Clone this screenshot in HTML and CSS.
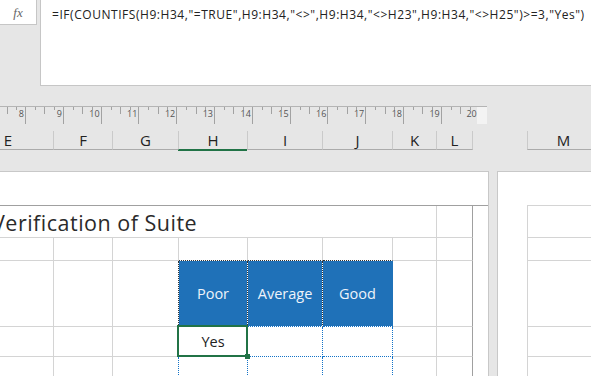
FILE: index.html
```html
<!DOCTYPE html>
<html lang="en">

<head>
  <meta charset="UTF-8">
  <meta name="viewport" content="width=device-width, initial-scale=1.0">
  <title>Verification of Suite</title>
  <link rel="stylesheet" href="styles.css">
</head>

<body>
  <div class="formula-bar">
    <div class="fx-box"><span class="fx">fx</span></div>
    <div class="formula-input">=IF(COUNTIFS(H9:H34,"=TRUE",H9:H34,"&lt;&gt;",H9:H34,"&lt;&gt;H23",H9:H34,"&lt;&gt;H25")&gt;=3,"Yes")</div>
  </div>

  <div class="ruler">
    <div class="ruler-unit first"><span>8</span></div>
    <div class="ruler-unit"><span>9</span></div>
    <div class="ruler-unit"><span>10</span></div>
    <div class="ruler-unit"><span>11</span></div>
    <div class="ruler-unit"><span>12</span></div>
    <div class="ruler-unit"><span>13</span></div>
    <div class="ruler-unit"><span>14</span></div>
    <div class="ruler-unit"><span>15</span></div>
    <div class="ruler-unit"><span>16</span></div>
    <div class="ruler-unit"><span>17</span></div>
    <div class="ruler-unit"><span>18</span></div>
    <div class="ruler-unit"><span>19</span></div>
    <div class="ruler-unit last"><span>20</span></div>
    <div class="ruler-end"></div>
  </div>

  <div class="col-headers">
    <div class="col-head col-e">E</div>
    <div class="col-head col-f">F</div>
    <div class="col-head col-g">G</div>
    <div class="col-head col-h active">H</div>
    <div class="col-head col-i">I</div>
    <div class="col-head col-j">J</div>
    <div class="col-head col-k">K</div>
    <div class="col-head col-l">L</div>
    <div class="col-gap"></div>
    <div class="col-head col-m">M</div>
  </div>

  <div class="sheet">
    <div class="page">
      <div class="grid">
        <!-- title row -->
        <div class="cell title"><span class="title-text">Verification of Suite</span></div>
        <div class="cell edge"></div>

        <!-- blank row -->
        <div class="cell"></div>
        <div class="cell"></div>
        <div class="cell"></div>
        <div class="cell ants-top"></div>
        <div class="cell ants-top"></div>
        <div class="cell ants-top"></div>
        <div class="cell"></div>
        <div class="cell edge"></div>

        <!-- rating header -->
        <div class="cell"></div>
        <div class="cell"></div>
        <div class="cell ants-right"></div>
        <div class="cell rating ants-right">Poor</div>
        <div class="cell rating ants-right">Average</div>
        <div class="cell rating rating-last">Good</div>
        <div class="cell"></div>
        <div class="cell edge"></div>

        <!-- result row -->
        <div class="cell"></div>
        <div class="cell"></div>
        <div class="cell"></div>
        <div class="cell value selected">Yes</div>
        <div class="cell copied"></div>
        <div class="cell copied"></div>
        <div class="cell"></div>
        <div class="cell edge"></div>

        <div class="cell"></div>
        <div class="cell"></div>
        <div class="cell copy-left"></div>
        <div class="cell copy-right"></div>
        <div class="cell copy-right"></div>
        <div class="cell copy-right"></div>
        <div class="cell"></div>
        <div class="cell edge"></div>
      </div>
    </div>

    <div class="page next">
      <div class="grid-next">
        <div class="cell row-title"></div>
        <div class="cell row-blank"></div>
        <div class="cell row-rating"></div>
        <div class="cell row-result"></div>
        <div class="cell row-result"></div>
      </div>
    </div>
  </div>
</body>

</html>
```

FILE: styles.css
```css
* {
  box-sizing: border-box;
}

body {
  margin: 0;
  width: 591px;
  height: 376px;
  overflow: hidden;
  background-color: #e6e6e6;
  font-family: "Open Sans", "Noto Sans", sans-serif;
  color: #222;
}

/* formula bar */

.formula-bar {
  display: flex;
  height: 86px;
  gap: 3px;
}

.fx-box {
  flex: none;
  width: 38px;
  height: 26px;
  margin: -1px 0 0 -1px;
  background-color: #fff;
  border: 1px solid #c6c6c6;
  text-align: center;
}

.fx {
  font-family: "Liberation Serif", serif;
  font-style: italic;
  font-size: 13px;
  line-height: 26px;
  color: #666;
}

.formula-input {
  flex: 1;
  margin-top: -1px;
  background-color: #fff;
  border-left: 1px solid #c6c6c6;
  border-bottom: 1px solid #c6c6c6;
  padding: 8px 0 0 11px;
  font-size: 12px;
  letter-spacing: 0.55px;
  line-height: 16px;
  white-space: nowrap;
}

/* ruler */

.ruler {
  display: flex;
  width: 487px;
  height: 18px;
  margin-top: 20px;
  border-top: 1px solid #b4b4b4;
  overflow: hidden;
}

.ruler-unit {
  flex: none;
  width: 37.8px;
  border-right: 1px solid #a2a2a2;
  padding-right: 1px;
  text-align: right;
  font-size: 9px;
  line-height: 14px;
  color: #555;
  background:
    linear-gradient(#a2a2a2, #a2a2a2) 18.4px 0 / 1px 7px no-repeat,
    linear-gradient(#a2a2a2, #a2a2a2) 9px 0 / 1px 3px no-repeat,
    linear-gradient(#a2a2a2, #a2a2a2) 28px 0 / 1px 3px no-repeat;
}

.ruler-unit.first {
  margin-left: -11.8px;
}

.ruler-unit.last {
  width: 35px;
  border-right: none;
  padding-right: 0;
}

.ruler-end {
  flex: 1;
  background-color: #f3f3f3;
}

/* column letters */

.col-headers {
  display: flex;
  height: 19px;
  margin-top: 7px;
}

.col-head {
  flex: none;
  border-left: 1px solid #cacaca;
  border-bottom: 1px solid #ababab;
  text-align: center;
  font-size: 15px;
  line-height: 18px;
  color: #222;
}

.col-e {
  width: 90px;
  margin-left: -37px;
  border-left: none;
}

.col-f { width: 59px; }
.col-g { width: 66px; }
.col-h { width: 69px; }
.col-i { width: 75px; }
.col-j { width: 70px; }
.col-k { width: 44px; }

.col-l {
  width: 37px;
  border-right: 1px solid #cacaca;
}

.col-gap {
  flex: none;
  width: 54px;
}

.col-m {
  width: 72px;
}

.col-head.active {
  border-bottom-color: #217346;
  box-shadow: 0 1px 0 #217346;
}

/* pages */

.sheet {
  display: flex;
  gap: 8px;
  margin-top: 21px;
}

.page {
  flex: none;
  width: 489px;
  height: 220px;
  background-color: #fff;
  border-top: 1px solid #c8c8c8;
  border-right: 1px solid #c8c8c8;
  padding-top: 33px;
}

.page.next {
  width: 120px;
  border-right: none;
  border-left: 1px solid #c8c8c8;
  padding-left: 29px;
}

.grid {
  display: grid;
  grid-template-columns: 54px 59px 66px 69px 75px 70px 44px 36px;
  grid-template-rows: 32px 23px 66px 30px 30px;
  border-top: 1px solid #a0a0a0;
}

.grid-next {
  display: grid;
  grid-template-rows: 32px 23px 66px 30px 30px;
  border-top: 1px solid #d4d4d4;
  border-left: 1px solid #d4d4d4;
}

.cell {
  border-right: 1px solid #d4d4d4;
  border-bottom: 1px solid #d4d4d4;
}

.grid-next .cell {
  border-right: none;
}

.cell.edge {
  border-right-color: #a0a0a0;
}

.title {
  grid-column: span 7;
  padding-top: 3px;
  overflow: hidden;
  font-size: 21.5px;
  letter-spacing: 0.5px;
  line-height: 28px;
  color: #2a2a2a;
  white-space: nowrap;
}

.title-text {
  margin-left: -8px;
}

/* copy marquee round the rating header */

.ants-top {
  border-bottom: 1px dotted #333;
}

.ants-right {
  border-right: 1px dotted #333;
}

.rating {
  display: flex;
  align-items: center;
  justify-content: center;
  background-color: #1f71b8;
  background-clip: padding-box;
  border-bottom: 1px dotted #1473c7;
  font-size: 14.5px;
  color: #eef3fa;
}

.rating-last {
  border-right: 1px solid #1f71b8;
}

.value {
  display: flex;
  align-items: center;
  justify-content: center;
  font-size: 14.5px;
}

.copied {
  border-right: 1px dotted #1473c7;
  border-bottom: 1px dotted #1473c7;
}

.copy-left,
.copy-right,
.selected {
  border-right: 1px dotted #1473c7;
}

.selected {
  position: relative;
  z-index: 1;
}

.selected::after {
  content: "";
  position: absolute;
  left: -2px;
  top: -2px;
  right: -1px;
  bottom: -1px;
  border: 2px solid #217346;
}

.selected::before {
  content: "";
  position: absolute;
  left: 66px;
  top: 27px;
  width: 5px;
  height: 5px;
  background-color: #217346;
  z-index: 2;
}
```
